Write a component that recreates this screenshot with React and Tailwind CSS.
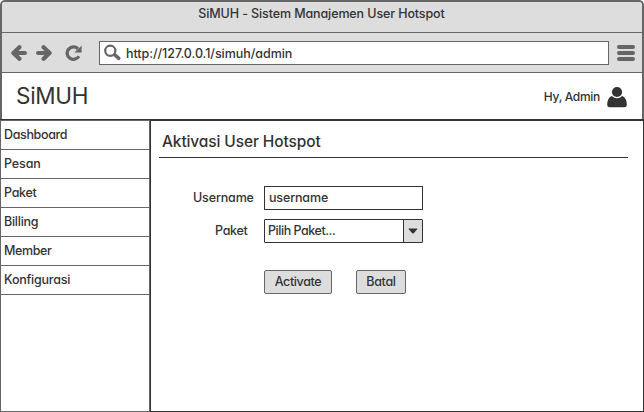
const menu = [
  { label: 'Dashboard', spacing: 'tracking-[-0.35px]' },
  { label: 'Pesan', spacing: 'tracking-[-0.1px]' },
  { label: 'Paket', spacing: 'tracking-[-0.3px]' },
  { label: 'Billing', spacing: 'tracking-[-0.25px]' },
  { label: 'Member', spacing: 'tracking-[-0.4px]' },
  { label: 'Konfigurasi', spacing: 'tracking-[-0.22px]' },
];

function Arrow({ className = '' }) {
  return (
    <svg width="16" height="16" viewBox="0 0 16 16" className={className}>
      <path d="M8.4 2.3 2.4 8l6 5.7M3 8h10.9" fill="none" stroke="#666" strokeWidth="4.2" strokeLinejoin="round" strokeLinecap="round" />
    </svg>
  );
}

function Toolbar() {
  return (
    <div className="flex h-10 shrink-0 items-center border-b border-[#666] bg-[#ddd] pr-[6px] pl-[9px]">
      <Arrow />
      <Arrow className="ml-[9px] rotate-180" />
      <svg width="17" height="16" viewBox="0 0 17 16" className="ml-[13px]">
        <path d="M13 3.9A6.3 6.2 0 1 0 13.9 11.2" fill="none" stroke="#666" strokeWidth="3.3" />
        <path d="M16.6 .7V7.6H9.3z" fill="#666" />
      </svg>
      <div className="ml-[17px] flex h-6 w-[510px] items-center border border-[#666] bg-white pl-1">
        <svg width="17" height="17" viewBox="0 0 17 17" className="shrink-0">
          <circle cx="6.3" cy="6.8" r="5.1" fill="none" stroke="#666" strokeWidth="2.2" />
          <path d="M10.8 10.9 14.8 14.4" stroke="#666" strokeWidth="3.4" strokeLinecap="round" />
        </svg>
        <span className="ml-[5px] pt-0.5 tracking-[-0.05px]">http://127.0.0.1/simuh/admin</span>
      </div>
      <div className="ml-2 flex flex-col gap-[2px]">
        <div className="h-1 w-[18px] rounded-full bg-[#666]" />
        <div className="h-1 w-[18px] rounded-full bg-[#666]" />
        <div className="h-1 w-[18px] rounded-full bg-[#666]" />
      </div>
    </div>
  );
}

export default function App() {
  return (
    <div className="flex h-[412px] w-[644px] flex-col overflow-hidden bg-white font-['Inter','Liberation_Sans',sans-serif] text-[12.5px] leading-4 font-medium whitespace-nowrap text-[#333] [font-feature-settings:'cv11']">
      <div className="flex h-[119px] shrink-0 flex-col overflow-hidden rounded-t-[5px] border-x-2 border-t-2 border-[#666]">
        <div className="flex h-[31px] shrink-0 justify-center border-b border-[#666] bg-[#ddd] pt-1 pr-px">
          <span className="tracking-[-0.11px]">SiMUH - Sistem Manajemen User Hotspot</span>
        </div>
        <Toolbar />
        <header className="flex grow items-center pr-[15px] pl-[14px]">
          <h1 className="text-[22.5px] leading-7 font-normal tracking-[-0.3px]">SiMUH</h1>
          <span className="ml-auto pt-px text-[12px] tracking-[-0.3px]">Hy, Admin</span>
          <svg width="20" height="22" viewBox="0 0 20 22" className="mt-px ml-[7px]" fill="#333">
            <circle cx="10" cy="6" r="5.1" />
            <path d="M4.7 10.1Q10 14.6 15.3 10.1 19.8 12.3 19.8 18.9 19.8 21.2 17.4 21.2H2.6Q.2 21.2.2 18.9.2 12.3 4.7 10.1z" />
          </svg>
        </header>
      </div>
      <div className="flex grow border-t border-[#333]">
        <nav className="w-[150px] border border-[#666]">
          {menu.map((item) => (
            <div key={item.label} className="h-[29px] border-b border-[#666] pt-1.5 pl-[3px]">
              <span className={item.spacing}>{item.label}</span>
            </div>
          ))}
        </nav>
        <main className="grow border border-[#333] pt-[11px] pr-[15px] pl-2">
          <h2 className="h-[26px] border-b border-[#333] pl-[3px] text-[15.5px] leading-5 tracking-[-0.12px]">Aktivasi User Hotspot</h2>
          <form className="mt-7 ml-[34px] flex flex-col">
            <div className="flex items-center">
              <label className="w-[71px] tracking-[-0.15px]">Username</label>
              <div className="flex h-6 w-[159px] items-center border border-[#333] pl-1">
                <span className="tracking-[-0.15px]">username</span>
              </div>
            </div>
            <div className="mt-[9px] flex items-center">
              <label className="w-[71px] pl-[22px] tracking-[-0.3px]">Paket</label>
              <div className="flex h-6 w-[159px] items-center rounded-[1px] border border-[#333] pl-[3px]">
                <span className="tracking-[-0.46px]">Pilih Paket...</span>
                <div className="ml-auto flex h-full w-[19px] items-center justify-center border-l border-[#333] bg-[#ddd]">
                  <svg width="10" height="6" viewBox="0 0 10 6">
                    <path d="M1 .5h8q.8 0 .2.7L5.7 5.2q-.7.6-1.4 0L.8 1.2Q.2.5 1 .5z" fill="#333" />
                  </svg>
                </div>
              </div>
            </div>
            <div className="mt-[27px] ml-[71px] flex gap-6">
              <button type="button" className="flex h-6 w-[68px] items-center justify-center rounded-[2px] border border-[#666] bg-[#ddd]">
                <span className="tracking-[-0.35px]">Activate</span>
              </button>
              <button type="button" className="flex h-6 w-[50px] items-center justify-center rounded-[2px] border border-[#666] bg-[#ddd]">
                <span className="tracking-[-0.3px]">Batal</span>
              </button>
            </div>
          </form>
        </main>
      </div>
    </div>
  );
}
